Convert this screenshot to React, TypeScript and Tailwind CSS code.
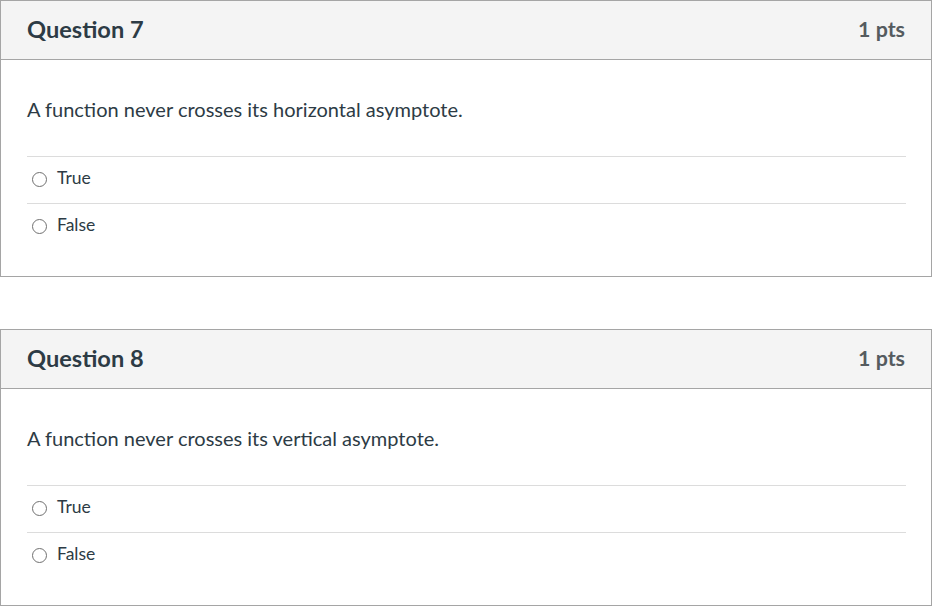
const questions = [
  { n: 7, text: 'A function never crosses its horizontal asymptote.' },
  { n: 8, text: 'A function never crosses its vertical asymptote.' },
];

function Radio() {
  return <span className="w-[15px] h-[15px] rounded-full border border-[#707070] bg-white shrink-0 mt-[1px]" />;
}

function QuestionCard({ n, text }: { n: number; text: string }) {
  return (
    <div className="w-[932px] border border-[#a5a5a5] bg-white">
      <div className="h-[59px] bg-[#f4f4f4] border-b border-[#a5a5a5] flex items-center justify-between pl-[26px] pr-[26px]">
        <h2 className="text-[23.6px] font-bold text-[#2d3b45] leading-none">Question {n}</h2>
        <span className="text-[21.4px] font-bold text-[#555b5f] leading-none">1 pts</span>
      </div>
      <div className="pl-[26px] pr-[25px] pt-[35px] pb-[26px]">
        <p className="text-[20px] leading-[28px] text-[#2d3b45] mb-[33px]">{text}</p>
        {['True', 'False'].map(a => (
          <div key={a} className="h-[47px] border-t border-[#dcdcdc] flex items-center gap-[10px] pl-[5px] pb-[3px]">
            <Radio />
            <span className="text-[17.5px] text-[#2d3b45]">{a}</span>
          </div>
        ))}
      </div>
    </div>
  );
}

export default function App() {
  return (
    <div className="bg-white min-h-[607px] flex flex-col gap-[52px]" style={{ fontFamily: 'Lato, "Open Sans", sans-serif' }}>
      {questions.map(q => (
        <QuestionCard key={q.n} n={q.n} text={q.text} />
      ))}
    </div>
  );
}
